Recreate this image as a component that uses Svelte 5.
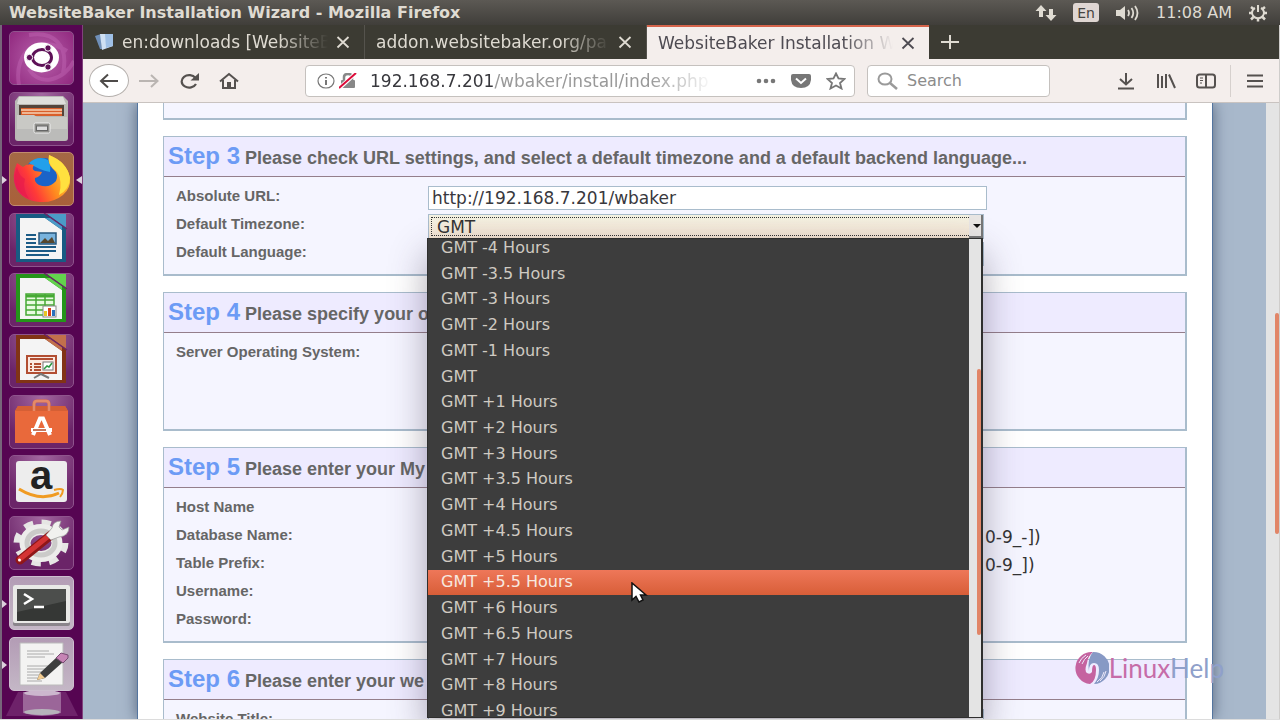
<script>
  const zones = ['-4', '-3.5', '-3', '-2', '-1', '', '+1', '+2', '+3', '+3.5', '+4', '+4.5', '+5', '+5.5', '+6', '+6.5', '+7', '+8', '+9'];
  const hovered = '+5.5';
  const credentials = [
    { id: 'host', label: 'Host Name', hint: '' },
    { id: 'dbname', label: 'Database Name:', hint: '0-9_-])' },
    { id: 'prefix', label: 'Table Prefix:', hint: '0-9_])' },
    { id: 'user', label: 'Username:', hint: '' },
    { id: 'pass', label: 'Password:', hint: '' }
  ];
</script>

{#snippet cross()}
  <svg width="14" height="14" viewBox="0 0 14 14" fill="none" stroke="currentColor" stroke-width="1.800"><path d="M1.5 2 12.500 12.500M12.500 2 1.500 12.500" /></svg>
{/snippet}

{#snippet page(dark, light)}
  <path d="M7 1H57V49H7Z" fill={dark} />
  <path d="M38 1H57V15Z" fill={light} />
  <path d="M11 5H36L53 17V46H11Z" fill="#f4f4f4" />
  <path d="M36 5 53 17V13L42 5Z" fill={light} />
  <path d="M35 0 58 16" stroke="#6b2468" stroke-width="1.500" />
{/snippet}

<div class="desktop">
  <header class="panel">
    <h1>WebsiteBaker Installation Wizard - Mozilla Firefox</h1>
    <div class="indicators">
      <svg width="22" height="18" viewBox="0 0 22 18" fill="#dfdbd2"><path d="M6 1 0.500 7H4V13H8V7H11.500ZM16 17 10.500 11H14V5H18V11H21.500Z" /></svg>
      <span class="lang">En</span>
      <svg class="sound" width="26" height="18" viewBox="0 0 26 18"><path d="M1 6H5L10 2V16L5 12H1Z" fill="#dfdbd2" /><path d="M13 6Q15 9 13 12M16.500 4Q20 9 16.500 14M20 2Q25 9 20 16" fill="none" stroke="#dfdbd2" stroke-width="1.800" /></svg>
      <time>11:08 AM</time>
      <svg width="20" height="18" viewBox="0 0 20 18" fill="none" stroke="#dfdbd2" stroke-width="2"><path d="M7 4A6 5.500 0 1 0 13 4M10 1V8" /><path d="M1 9H4M16 9H19M3 3 5.500 5M17 3 14.500 5M3 15.500 5.500 13M17 15.500 14.500 13M10 14.500V17.500" stroke-width="2.500" /></svg>
    </div>
  </header>

  <div class="below">
    <nav class="launcher" aria-label="Launcher">
      <button class="tile dash" aria-label="Dash">
        <svg viewBox="0 0 65 54"><path d="M10 54C4 20 30 2 58 20M65 30C55 50 30 56 20 38M20 4C45 0 60 14 54 42" fill="none" stroke="#c66bb9" stroke-opacity=".4" stroke-width="4" /><ellipse cx="32.500" cy="26.500" rx="17.500" ry="15" fill="#fff" /><ellipse cx="33" cy="26.500" rx="9.500" ry="8" fill="none" stroke="#5e1157" stroke-width="3" /><g fill="#5e1157" stroke="#fff"><circle cx="20.500" cy="26.500" r="3.200" /><circle cx="39" cy="17" r="3.200" /><circle cx="39" cy="36" r="3.200" /></g></svg>
      </button>
      <button class="tile" aria-label="Files">
        <svg viewBox="0 0 65 54"><path d="M10 4H54L59 9V46Q59 49 56 49H9Q6 49 6 46V9Z" fill="#b9b9b5" /><path d="M10 5H54L57 12H8Z" fill="#dededb" /><path d="M10 13H55V24H10Z" fill="#54443b" /><path d="M12 16H53V24H12Z" fill="#d95f2b" /><path d="M12 18H53M13 21H53" stroke="#f6d2b5" stroke-width="1.500" /><path d="M8 23H25L28 25H58V48H8Z" fill="#c9c9c5" /><path d="M8 37H58V48H8Z" fill="#aaa" opacity=".45" /><rect x="25" y="31" width="16" height="10" rx="1.500" fill="#8f8f8b" stroke="#eee" /><rect x="27.500" y="34" width="11" height="4.500" fill="#ddd" stroke="#666" /></svg>
      </button>
      <button class="tile fox running active" aria-label="Firefox">
        <svg viewBox="0 0 65 54"><defs><linearGradient id="fx" x1="0" y1=".7" x2="1" y2=".3"><stop offset="0" stop-color="#e31560" /><stop offset=".3" stop-color="#ff3b37" /><stop offset=".6" stop-color="#ff8a1f" /><stop offset="1" stop-color="#ffd83a" /></linearGradient></defs><ellipse cx="34" cy="22" rx="19" ry="16" fill="#1b63c8" /><path d="M20 11Q29 3 39 8Q42 13 41 20Q30 18 20 11Z" fill="#22a0ea" /><path d="M8 11 14 15Q18 11 25 13Q22 17 26 19L33 20Q31 25 26 26Q25 30 30 33Q40 37 47 29Q50 22 44 17Q38 12 40 3Q58 10 61 26Q62 36 54 43Q44 51 31 50Q14 49 7 36Q2 24 8 11Z" fill="url(#fx)" /><path d="M40 3Q58 10 61 26Q60 38 50 43Q54 29 48 20Q38 13 40 3Z" fill="#ffe13f" /><path d="M6 22Q5 39 20 47Q13 36 16 27Q10 24 8 15Z" fill="#e81c48" opacity=".7" /></svg>
      </button>
      <button class="tile" aria-label="Writer">
        <svg viewBox="0 0 65 54">{@render page('#185b83', '#4b9bc8')}<path d="M17 22H27M17 26H27M17 30H27M17 34H47M17 38H47M17 42H40" stroke="#1b5b86" stroke-width="2" /><rect x="30" y="20" width="17" height="11" fill="#78b3dd" stroke="#26577c" stroke-width="1.500" /><path d="M31 30 36 25 39 28 43 24 46 30Z" fill="#55472e" /></svg>
      </button>
      <button class="tile" aria-label="Calc">
        <svg viewBox="0 0 65 54">{@render page('#25951a', '#63d34d')}<rect x="17" y="21" width="28" height="21" fill="#e8fbe0" stroke="#46a934" stroke-width="1.500" /><path d="M17 23H45" stroke="#46a934" stroke-width="3" /><path d="M17 27H45M17 32H45M17 37H45M27 21V42M36 21V42" stroke="#46a934" stroke-width="1.500" /><rect x="34" y="33" width="13" height="11" fill="#fff" stroke="#888" /><path d="M35 38H38V43H35Z" fill="#e9c520" /><path d="M39 35H42V43H39Z" fill="#d9421d" /><path d="M43 37H46V43H43Z" fill="#2a70bc" /></svg>
      </button>
      <button class="tile" aria-label="Impress">
        <svg viewBox="0 0 65 54">{@render page('#813316', '#c2704c')}<rect x="18" y="22" width="29" height="17" fill="#fbe9e2" stroke="#b24e32" stroke-width="2" /><path d="M21 25H44" stroke="#b24e32" stroke-width="2" /><path d="M21 30H23M25 30H32M21 33H23M25 33H32M21 36H23M25 36H32" stroke="#b24e32" stroke-width="2" /><rect x="34" y="28" width="10" height="8" fill="#fff" stroke="#777" /><path d="M35 35 38 32 40 33 43 29" fill="none" stroke="#2b9942" stroke-width="1.500" /><path d="M25 44 32 40 40 44" fill="none" stroke="#777" stroke-width="2" /></svg>
      </button>
      <button class="tile" aria-label="Software">
        <svg viewBox="0 0 65 54"><path d="M25 16V9Q25 6 28 6H37Q40 6 40 9V16" fill="none" stroke="#db6c43" stroke-width="3" /><path d="M9 11H56L59 16V48H6V16Z" fill="#e9693b" /><path d="M9 11H56L59 16H6Z" fill="#d55f35" /><path d="M25 16V9Q25 6 28 6H37Q40 6 40 9V16" fill="none" stroke="#e58a68" stroke-width="2.500" /><path d="M24 40 31 23.500H34L41 40M22 35H43" fill="none" stroke="#fff" stroke-width="4" /><path d="M24 35H37" stroke="#b34b28" stroke-width="1.500" /></svg>
      </button>
      <button class="tile" aria-label="Amazon">
        <svg viewBox="0 0 65 54"><rect x="7" y="6" width="51" height="41" rx="3" fill="#ededed" /><text x="32" y="34" text-anchor="middle" font-family="Liberation Sans" font-size="40" font-weight="bold" fill="#222">a</text><path d="M10 34Q31 47 50 38" fill="none" stroke="#f09b22" stroke-width="3" /><path d="M45 35Q52 33 54 35Q54 38 51 42" fill="none" stroke="#f09b22" stroke-width="2" /></svg>
      </button>
      <button class="tile" aria-label="System Settings">
        <svg viewBox="0 0 65 54"><ellipse cx="32" cy="27" rx="24" ry="20" fill="none" stroke="#e6e6e4" stroke-width="7" stroke-dasharray="9 8.300" /><ellipse cx="32" cy="27" rx="16" ry="13.500" fill="none" stroke="#ededeb" stroke-width="11" /><ellipse cx="32" cy="27" rx="14" ry="12" fill="none" stroke="#cbcbc9" stroke-width="5" /><path d="M11 44 42 19" stroke="#8f1718" stroke-width="9" stroke-linecap="round" /><path d="M11 43 42 18" stroke="#d43434" stroke-width="5" stroke-linecap="round" /><circle cx="10.500" cy="44" r="1.500" fill="#fff" /><path d="M37 19 43 12Q44 5 52 5L50 11 53 14 60 11Q60 20 50 21L42 24Z" fill="#f1f1ef" stroke="#999" stroke-width=".7" /></svg>
      </button>
      <button class="tile pale running" aria-label="Terminal">
        <svg viewBox="0 0 65 54"><rect x="4" y="9" width="57" height="41" rx="2" fill="#8a858b" /><rect x="4" y="9" width="57" height="38" rx="2" fill="#e9e9e7" /><rect x="8" y="13" width="49" height="32" fill="#353735" /><path d="M8 13H57V25L8 36Z" fill="#646664" opacity=".5" /><path d="M15 18 23 23 15 28M25 31H35" fill="none" stroke="#fff" stroke-width="2.500" /></svg>
      </button>
      <button class="tile pale running" aria-label="Text Editor">
        <svg viewBox="0 0 65 54"><path d="M11 6H54V48H11Z" fill="#f3f3f2" stroke="#bbb" /><path d="M18 14H40M18 17H45M18 20H36M18 29H45M18 32H42M18 35H38M18 38H36M18 41H34M18 44H33" stroke="#aaa" /><path d="M28 43 31 36 48 20 54 25 36 41Z" fill="#3d3e3e" /><path d="M28 43 31 36 36 41Z" fill="#f2cc91" /><path d="M47 21 52 16 59 18 59 21 54 26Z" fill="#c684b5" stroke="#774a72" /></svg>
      </button>
      <svg class="trash" viewBox="0 0 72 28" aria-hidden="true"><path d="M12 2H60L72 26H0Z" fill="#9c5a98" opacity=".35" /><path d="M17 2H55V23Q36 29 17 23Z" fill="#c7a9c8" opacity=".5" /><ellipse cx="36" cy="3" rx="18" ry="3" fill="#ccb7ce" /><ellipse cx="36" cy="22" rx="18" ry="3" fill="#b7b3bb" /></svg>
    </nav>

    <div class="browser">
      <div class="tabs">
        <div class="tab">
          <svg width="20" height="18" viewBox="0 0 20 18"><path d="M1 3 7 1 8 16 6 16Z" fill="#6f8fb8" /><path d="M6 1 19 1V13L8 17Z" fill="#cfe0f3" /><path d="M11 1 19 1V13L12 15Z" fill="#9fc0e6" /></svg>
          <span>en:downloads [WebsiteB</span>
          <button aria-label="Close tab">{@render cross()}</button>
        </div>
        <div class="tab">
          <span>addon.websitebaker.org/pa</span>
          <button aria-label="Close tab">{@render cross()}</button>
        </div>
        <div class="tab current">
          <span>WebsiteBaker Installation W</span>
          <button aria-label="Close tab">{@render cross()}</button>
        </div>
        <button class="newtab" aria-label="New tab"><svg width="18" height="16" viewBox="0 0 18 16" stroke="#dfdbd2" stroke-width="2"><path d="M9 1V15M0 8H18" /></svg></button>
      </div>

      <div class="toolbar">
        <button class="back" aria-label="Back"><svg width="20" height="16" viewBox="0 0 20 16" fill="none" stroke="#4e4b49" stroke-width="2"><path d="M19 8H2M9 1.500 2 8 9 14.500" /></svg></button>
        <button class="forward" aria-label="Forward"><svg width="20" height="16" viewBox="0 0 20 16" fill="none" stroke="#bab5b2" stroke-width="2"><path d="M0 8H18M12 2 18.500 8 12 14" /></svg></button>
        <button aria-label="Reload"><svg width="20" height="16" viewBox="0 0 20 16" fill="none" stroke="#55514f" stroke-width="2.200"><path d="M16.500 5A7.500 6.200 0 1 0 17 11" /><path d="M20 0V7.500H11.500Z" fill="#55514f" stroke="none" /></svg></button>
        <button aria-label="Home"><svg width="20" height="18" viewBox="0 0 20 18" fill="none" stroke="#55514f" stroke-width="2"><path d="M1 9.500 10 2 19 9.500M4 8V16H16V8" /><path d="M9 16V11H11V16" fill="#55514f" /></svg></button>
        <div class="urlbar">
          <svg width="18" height="16" viewBox="0 0 18 16" fill="none" stroke="#777"><ellipse cx="9" cy="8" rx="8" ry="7" stroke-width="1.200" /><path d="M9 7V12M9 4V5.500" stroke-width="2" /></svg>
          <svg class="lock" width="18" height="16" viewBox="0 0 18 16"><path d="M5 8V4Q5 1 9 1T13 4V8" fill="none" stroke="#888" stroke-width="2.500" /><rect x="2" y="7" width="14" height="8" rx="1" fill="#888" /><path d="M0 15.500 17 0" stroke="#fff" stroke-width="4" /><path d="M0 15 17 0" stroke="#dc0b39" stroke-width="2" /></svg>
          <div class="address">192.168.7.201<span>/wbaker/install/index.php</span></div>
          <button aria-label="Page actions"><svg width="20" height="6" viewBox="0 0 20 6" fill="#777"><circle cx="3" cy="3" r="2.300" /><circle cx="10" cy="3" r="2.300" /><circle cx="17" cy="3" r="2.300" /></svg></button>
          <button aria-label="Pocket"><svg width="20" height="16" viewBox="0 0 20 16"><path d="M2 1H18Q20 1 20 3V7Q19 15 10 15T0 7V3Q0 1 2 1Z" fill="#777" /><path d="M5 5.500 10 10 15 5.500" fill="none" stroke="#fff" stroke-width="2" /></svg></button>
          <button aria-label="Bookmark"><svg width="20" height="18" viewBox="0 0 20 18" fill="none" stroke="#777" stroke-width="1.800"><path d="M10 1.500 12.500 6.500 18.500 7 14 11 15.500 16.500 10 13.500 4.500 16.500 6 11 1.500 7 7.500 6.500Z" /></svg></button>
        </div>
        <label class="search">
          <svg width="22" height="18" viewBox="0 0 22 18" fill="none" stroke="#9a9a9a" stroke-width="2"><ellipse cx="8" cy="7" rx="6.500" ry="5.500" /><path d="M13 11 20 17" stroke-width="2.500" /></svg>
          <input aria-label="Search" placeholder="Search" />
        </label>
        <button aria-label="Downloads"><svg width="20" height="18" viewBox="0 0 20 18" fill="none" stroke="#55514f" stroke-width="2"><path d="M10 1V12M4 7 10 12.500 16 7M2 16.500H18" /></svg></button>
        <button class="tool" aria-label="Library"><svg width="20" height="16" viewBox="0 0 20 16" fill="none" stroke="#55514f" stroke-width="2"><path d="M2 1V15M6 3V15M10 1V15M13 1.500 19 15" /></svg></button>
        <button class="tool" aria-label="Sidebars"><svg width="20" height="16" viewBox="0 0 20 16" fill="none" stroke="#55514f" stroke-width="2"><rect x="1" y="1.500" width="18" height="13" rx="2.500" /><path d="M10 2V14" /><path d="M4 5H7M4 7.500H7M4 10H6" stroke-width="1" /></svg></button>
        <span class="rule"></span>
        <button aria-label="Menu"><svg width="20" height="16" viewBox="0 0 20 16" stroke="#55514f" stroke-width="2"><path d="M2 2.500H18M2 8H18M2 13.500H18" /></svg></button>
      </div>

      <div class="viewport">
        <main class="sheet">
          <section class="step previous"></section>

          <section class="step">
            <h2><b>Step 3</b> Please check URL settings, and select a default timezone and a default backend language...</h2>
            <div class="rows">
              <div class="row"><label for="url">Absolute URL:</label><input id="url" value="http://192.168.7.201/wbaker" /></div>
              <div class="row">
                <label for="tz">Default Timezone:</label>
                <div class="picker">
                  <select id="tz"><option>GMT</option></select>
                  <span class="arrow"></span>
                  <div class="popup">
                    <div class="clip">
                      <ul role="listbox" aria-label="Default Timezone">
                        {#each zones as zone}
                          <li role="option" aria-selected={zone === hovered} class:hovered={zone === hovered}>{zone ? `GMT ${zone} Hours` : 'GMT'}</li>
                        {/each}
                      </ul>
                    </div>
                    <div class="popupbar"><i></i></div>
                  </div>
                </div>
              </div>
              <div class="row"><label for="language">Default Language:</label><input id="language" class="short" /></div>
            </div>
          </section>

          <section class="step">
            <h2><b>Step 4</b> Please specify your o</h2>
            <div class="rows system"><div class="row"><span>Server Operating System:</span></div></div>
          </section>

          <section class="step">
            <h2><b>Step 5</b> Please enter your My</h2>
            <div class="rows">
              {#each credentials as item}
                <div class="row"><label for={item.id}>{item.label}</label><input id={item.id} class="short hidden-edge" /><span class="hint">{item.hint}</span></div>
              {/each}
            </div>
          </section>

          <section class="step">
            <h2><b>Step 6</b> Please enter your we</h2>
            <div class="rows"><div class="row"><label for="title">Website Title:</label><input id="title" class="short" /></div></div>
          </section>
        </main>
        <div class="scrollbar"><i></i></div>
      </div>
    </div>
  </div>

  <div class="watermark">
    <svg width="34" height="34" viewBox="0 0 34 34"><path d="M18 1A16 16 0 0 0 15 33Q21 30 21 19Q21 14 19 14T17 21Q15 24 12 22T12 12Q13 5 18 1Z" fill="#c563a0" /><path d="M18 1A16 16 0 0 1 19 33Q24 27 24 19Q24 12 19 12T14 20Q12 8 18 1Z" fill="#8799c5" /><path d="M4 12Q6 7 11 4M7 13Q9 8 13 5M22 31Q28 27 29 21M25 30Q30 26 31 20" fill="none" stroke="#eeeafa" /></svg>
    <span>Linux<em>Help</em></span>
  </div>

  <svg class="cursor" width="17" height="24" viewBox="0 0 17 24"><path d="M1 1V18L5 14.500 8 20 12 18 9.500 13H15Z" fill="#fff" stroke="#111" stroke-width="1.500" /></svg>
</div>

<style>
  :global(body) { margin: 0; }
  * { box-sizing: border-box; }
  button { border: 0; padding: 0; background: none; display: flex; align-items: center; justify-content: center; color: inherit; }
  svg { display: block; flex: none; }
  .desktop { position: relative; height: 100vh; display: flex; flex-direction: column; overflow: hidden; border-bottom: 1px solid #dcdcdc; font-family: "DejaVu Sans", sans-serif; background: #3c3b37; }

  .panel { height: 25px; flex: none; display: flex; align-items: center; justify-content: space-between; padding: 0 12px 0 9px; background: linear-gradient(#5c5954, #403e3a); color: #dfdbd2; white-space: nowrap; }
  h1 { margin: 0; font-size: 16px; line-height: 24px; }
  .indicators { display: flex; align-items: center; font-size: 16px; }
  .lang { margin: 0 16px 0 16px; width: 26px; height: 19px; border-radius: 3px; background: #dfd6d2; color: #45433f; font-size: 14px; line-height: 20px; text-align: center; }
  .sound { margin-right: 15px; }
  time { margin-right: 16px; }

  .below { flex: 1; min-height: 0; display: flex; }
  .launcher { position: relative; flex: none; width: 83px; padding: 6px 0 28px 7px; border-left: 2px solid #77657a; border-right: 1px solid #80427c; background: #560552; display: flex; flex-direction: column; justify-content: space-between; }
  .tile { position: relative; z-index: 1; width: 65px; height: 54px; border: 1px solid #8f548d; border-radius: 5px; background: radial-gradient(circle at 50% 0, #a368a1, #6b2468 75%); }
  .tile svg { width: 65px; height: 54px; }
  .dash { background: radial-gradient(circle, #b862ac, #91297f); }
  .fox { background: linear-gradient(#a46845, #a9603a); border-color: #c18b6e; }
  .pale { background: linear-gradient(#b39cb5, #c4b7c6); border-color: #cdbecf; }
  .running::before, .active::after { content: ""; position: absolute; top: 23px; border: 4px solid transparent; }
  .running::before { left: -8px; border-left: 5px solid #dcd0dc; border-right: 0; }
  .active::after { right: -9px; border-right: 6px solid #dcd0dc; border-left: 0; }
  .trash { position: absolute; left: 4px; bottom: 1px; width: 72px; height: 28px; }

  .browser { flex: 1; min-width: 0; display: flex; flex-direction: column; border-right: 1px solid #cfcdcb; }
  .tabs { height: 34px; flex: none; display: flex; background: #3c3b33; color: #dfdbd2; font-size: 17px; }
  .tab { flex: 0 1 282px; min-width: 0; display: flex; align-items: center; gap: 8px; padding: 0 14px 0 11px; border-right: 1px solid #55534d; }
  .tab span { flex: 1; min-width: 0; overflow: hidden; white-space: nowrap; line-height: 32px; mask-image: linear-gradient(90deg, #000 calc(100% - 50px), transparent); }
  .tab.current { background: #f4eeec; color: #4e4b52; border-top: 2px solid #d5644b; border-right: 0; }
  .newtab { width: 42px; }

  .toolbar { height: 44px; flex: none; display: flex; align-items: center; padding: 0 14px 0 6px; background: #f4eeec; border-bottom: 1px solid #c9c3c0; }
  .back { width: 40px; height: 33px; border: 1px solid #b5b0ad; border-radius: 50%; background: #fff; margin-right: 10px; }
  .forward, .forward + button { margin-right: 20px; }
  .urlbar, .search { height: 32px; display: flex; align-items: center; border: 1px solid #c5c1be; border-radius: 4px; background: #fff; }
  .urlbar { flex: 1; min-width: 0; margin: 0 12px 0 66px; padding: 0 8px 0 11px; }
  .lock { margin: 0 13px 0 4px; }
  .address { flex: 1; min-width: 0; overflow: hidden; white-space: nowrap; font-size: 17px; line-height: 28px; color: #38383d; mask-image: linear-gradient(90deg, #000 280px, transparent 344px); }
  .address span { color: #999; }
  .urlbar button { margin-left: 15px; }
  .search { width: 183px; margin-right: 66px; padding: 0 9px; gap: 8px; }
  .search input { flex: 1; min-width: 0; border: 0; padding: 0; background: none; font: 16px "DejaVu Sans", sans-serif; }
  .search input::placeholder { color: #8c8c8c; opacity: 1; }
  .tool { margin-left: 20px; }
  .rule { width: 1px; height: 32px; margin: 0 14px; background: #d6d0cd; }

  .viewport { flex: 1; min-height: 0; display: flex; overflow: hidden; background: #a8b8cb; }
  .sheet { flex: 1; min-width: 0; margin: 0 53px 0 54px; padding: 0 25px; background: #fff; border: solid #54759f; border-width: 0 1px; box-shadow: 0 0 14px #56657c; color: #666; font-family: "Liberation Sans", sans-serif; }
  .step { margin-bottom: 16px; background: #f5f5ff; border: 1px solid #a9bccc; border-right-width: 2px; border-bottom-width: 2px; }
  .previous { height: 17px; border-top: 0; }
  h2 { margin: 0; height: 40px; padding-left: 4px; overflow: hidden; white-space: nowrap; background: #eeebff; border-bottom: 1px solid #947e8b; font-size: 18px; line-height: 38px; }
  h2 b { font-size: 24px; color: #6c9bf5; }
  .rows { padding: 9px 12px 4px; }
  .system { padding-bottom: 59px; }
  .row { height: 28px; display: grid; grid-template-columns: 252px 557px 1fr; align-items: start; font-size: 15px; font-weight: bold; line-height: 20px; }
  .row input { width: 559px; height: 24px; padding: 0 3px; border: 1px solid #a9bccc; background: #fff; color: #38383d; font: 17px "DejaVu Sans", sans-serif; }
  .row .short { width: 556px; }
  .row .hidden-edge { width: 540px; }
  .hint { color: #333; font-size: 17px; line-height: 24px; font-weight: normal; font-family: "DejaVu Sans", sans-serif; }

  .picker { position: relative; width: 556px; height: 25px; }
  select { appearance: none; display: block; width: 556px; height: 25px; padding: 0 8px; border: 1px solid #a9bccc; border-radius: 0; background: linear-gradient(#f4f2e3, #f3e3d2); color: #333; font: 17px "DejaVu Sans", sans-serif; outline: 1px dotted #333; outline-offset: -4px; }
  .arrow { position: absolute; top: 1px; right: 1px; width: 14px; height: 23px; background: #e9e6e4; border: solid #777; border-width: 0 2px 2px 0; }
  .arrow::after { content: ""; position: absolute; left: 4px; top: 9px; border: 4px solid transparent; border-top-color: #111; border-bottom: 0; }
  .popup { position: absolute; z-index: 2; left: -1px; top: 24px; width: 556px; height: 480px; display: flex; border: solid #2f2f2e; border-width: 1px 2px 1px 1px; background: #3d3d3d; box-shadow: 0 16px 34px rgba(60, 50, 75, .42); }
  .clip { flex: 1; overflow: hidden; }
  ul { display: flex; flex-direction: column; height: 489px; margin: -4px 0 0; padding: 0; list-style: none; }
  li { flex: 1; display: flex; align-items: center; padding-left: 13px; color: #cfcac2; font: 16px/20px "DejaVu Sans", sans-serif; }
  .hovered { background: linear-gradient(#ee7759, #d85e38); color: #f7e9e0; }
  .popupbar { width: 12px; background: #e4e4e4; }
  .popupbar i, .scrollbar i { display: block; width: 4px; margin-left: auto; border-radius: 2px; background: #e18567; }
  .popupbar i { height: 266px; margin-top: 130px; }
  .scrollbar { flex: none; width: 13px; background: #e4e4e4; }
  .scrollbar i { height: 221px; margin-top: 210px; }

  .watermark { position: absolute; right: 56px; bottom: 34px; display: flex; align-items: center; gap: 0; color: #c66ca8; font: 26px "Lato", sans-serif; z-index: 3; }
  em { font-style: normal; color: #8fa0ca; }
  .cursor { position: absolute; left: 631px; top: 582px; z-index: 4; }
</style>
